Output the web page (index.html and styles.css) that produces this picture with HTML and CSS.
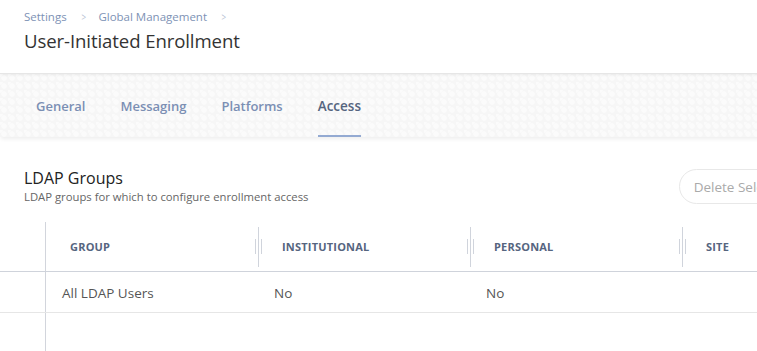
FILE: index.html
```html
<!DOCTYPE html>
<html>
<head>
<meta charset="utf-8">
<link rel="stylesheet" href="styles.css">
</head>
<body>
<div class="page">
  <header class="page-header">
    <nav class="breadcrumb">
      <span class="crumb">Settings</span>
      <span class="sep">&gt;</span>
      <span class="crumb">Global Management</span>
      <span class="sep">&gt;</span>
    </nav>
    <h1 class="title">User-Initiated Enrollment</h1>
  </header>
  <div class="tabbar">
    <span class="tab">General</span>
    <span class="tab">Messaging</span>
    <span class="tab">Platforms</span>
    <span class="tab active">Access</span>
  </div>
  <section class="panel">
    <div class="panel-head">
      <div class="panel-titles">
        <h2 class="panel-title">LDAP Groups</h2>
        <p class="panel-sub">LDAP groups for which to configure enrollment access</p>
      </div>
      <button class="btn">Delete Selected</button>
    </div>
    <div class="grid">
      <div class="row head">
        <div class="cell sel"></div>
        <div class="cell hcell">GROUP<span class="resizer"></span></div>
        <div class="cell hcell">INSTITUTIONAL<span class="resizer"></span></div>
        <div class="cell hcell">PERSONAL<span class="resizer"></span></div>
        <div class="cell hcell">SITE</div>
      </div>
      <div class="row body">
        <div class="cell sel"></div>
        <div class="cell bcell">All LDAP Users</div>
        <div class="cell bcell">No</div>
        <div class="cell bcell">No</div>
        <div class="cell bcell"></div>
      </div>
      <div class="row empty">
        <div class="cell sel"></div>
      </div>
    </div>
  </section>
</div>
</body>
</html>
```
FILE: styles.css
```css
html, body {
  margin: 0;
  padding: 0;
  background: #fff;
  overflow: hidden;
}
body {
  font-family: "Open Sans", "Liberation Sans", sans-serif;
  width: 757px;
  height: 351px;
}
.page {
  width: 830px;
}
.page-header {
  height: 74px;
  box-sizing: border-box;
  padding: 9px 24px 0;
  border-bottom: 1px solid #e6e6e6;
  box-shadow: 0 1px 3px rgba(0,0,0,0.06);
  position: relative;
  z-index: 1;
}
.breadcrumb {
  display: flex;
  align-items: center;
  font-size: 11.5px;
  line-height: 16px;
  color: #7d92b5;
}
.sep {
  color: #b8c2d3;
  font-size: 10px;
  margin: 0 12px 0 14px;
  transform: scaleX(0.8);
}
.title {
  margin: 4px 0 0;
  font-weight: 400;
  font-size: 18.6px;
  line-height: 24px;
  color: #333;
  letter-spacing: -0.1px;
}
.tabbar {
  height: 63px;
  box-sizing: border-box;
  display: flex;
  align-items: stretch;
  gap: 35px;
  padding: 0 36px;
  background-color: #f6f6f6;
  background-image:
    radial-gradient(circle at 4px 4px, #fbfbfb 2.5px, transparent 3px),
    radial-gradient(circle at 0px 0px, #fbfbfb 2.5px, transparent 3px);
  background-size: 8px 8px;
  box-shadow: 0 3px 4px -1px rgba(0,0,0,0.07);
  position: relative;
}
.tab {
  display: flex;
  align-items: center;
  padding-top: 2px;
  font-size: 13px;
  font-weight: 600;
  color: #7b8fb4;
  border-bottom: 2px solid transparent;
  box-sizing: border-box;
}
.tab.active {
  color: #55657f;
  border-bottom-color: #94aad2;
  font-size: 13.5px;
}
.panel {
  padding-top: 30px;
}
.panel-head {
  display: flex;
  justify-content: space-between;
  align-items: flex-start;
  padding: 0 24px;
}
.panel-title {
  margin: 0;
  font-size: 16px;
  font-weight: 400;
  line-height: 22px;
  color: #222;
}
.panel-sub {
  margin: 1px 0 0;
  font-size: 11.3px;
  line-height: 14px;
  color: #666;
}
.btn {
  margin-top: 2px;
  height: 35px;
  padding: 0 14px;
  border: 1px solid #e8e8e8;
  border-radius: 18px;
  background: #fff;
  color: #aaa;
  font-family: inherit;
  font-size: 13.5px;
}
.grid {
  margin-top: 18px;
}
.row {
  display: grid;
  grid-template-columns: 46px 212px 212px 212px 212px;
}
.row.head { height: 49px; border-bottom: 1px solid #cfd3db; }
.row.body { height: 40px; border-bottom: 1px solid #e6e6e6; }
.row.empty { height: 40px; }
.cell {
  display: flex;
  align-items: center;
  position: relative;
}
.cell.sel { border-right: 1px solid #d2d5dc; }
.hcell {
  padding-left: 24px;
  font-size: 11px;
  font-weight: 700;
  color: #56657f;
  letter-spacing: 0.2px;
}
.bcell {
  padding-left: 16px;
  padding-top: 2px;
  font-size: 13.5px;
  color: #555;
}
.resizer {
  position: absolute;
  right: -1px;
  top: 5px;
  width: 1px;
  height: 40px;
  background: #d0d4dc;
}
.resizer::before, .resizer::after {
  content: "";
  position: absolute;
  top: 12px;
  width: 1px;
  height: 15px;
  background: #d0d4dc;
}
.resizer::before { left: -3px; }
.resizer::after { left: 3px; }
```
